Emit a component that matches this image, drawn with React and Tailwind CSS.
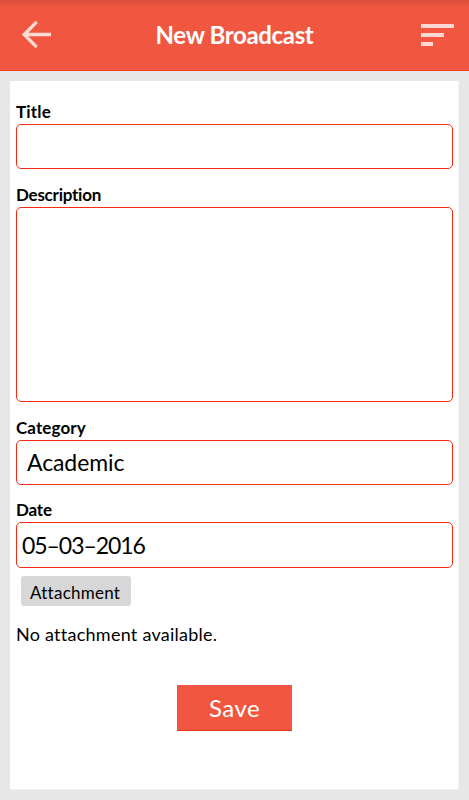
function BackIcon() {
  return (
    <svg className="block h-8 w-8" viewBox="0 0 32 32" fill="none" stroke="#ffd9d4" strokeWidth="3.4">
      <path d="M30 15.5H3.5M15.7 2.9L3.2 15.5L15.7 28.1" />
    </svg>
  );
}

function SortIcon() {
  return (
    <div className="flex w-[33px] flex-col gap-[5px]">
      <div className="h-[4px] w-[33px] bg-[#ffd6d1]" />
      <div className="h-[4px] w-[23px] bg-[#ffd6d1]" />
      <div className="h-[4px] w-[12px] bg-[#ffd6d1]" />
    </div>
  );
}

function Field({ label, tracking, height, gap, children }) {
  return (
    <div className={gap}>
      <div className="flex h-[24px] items-center text-[17px] font-bold">
        <span className={tracking}>{label}</span>
      </div>
      <div className={`flex items-center rounded-[5px] border border-[#f52a10] text-[23px] ${height}`}>{children}</div>
    </div>
  );
}

export default function App() {
  return (
    <div className="flex h-[800px] w-[469px] flex-col overflow-hidden whitespace-nowrap bg-[#e7e7e7] font-['Lato','Noto_Sans',sans-serif] text-black [font-variant-ligatures:none]">
      <header className="flex h-[71px] shrink-0 items-center justify-between border-b border-[#f23c0c] bg-linear-to-b from-[#dc4f3b] to-[#f15740] to-[8px] pr-[15px] pl-[21px]">
        <BackIcon />
        <h1 className="pr-[5px] text-[24px] font-bold text-white">
          <span className="tracking-[-0.35px]">New Broadcast</span>
        </h1>
        <SortIcon />
      </header>
      <main className="mx-[10px] mt-[10px] flex h-[709px] flex-col border-r border-b border-[#f2f2f2] bg-white pr-[5px] pl-[6px] pt-[19px]">
        <Field label="Title" tracking="tracking-[0.2px]" height="h-[45px]" gap="" />
        <Field label="Description" tracking="tracking-[-0.25px]" height="h-[195px]" gap="mt-[14px]" />
        <Field label="Category" tracking="tracking-[0.1px]" height="h-[45px]" gap="mt-[14px]">
          <span className="pl-[10px] tracking-[-0.1px]">Academic</span>
        </Field>
        <Field label="Date" tracking="tracking-[-0.2px]" height="h-[46px]" gap="mt-[13px]">
          <span className="pl-[5px] tracking-[-1.05px]">05–03–2016</span>
        </Field>
        <button className="mt-[8px] ml-[5px] flex h-[30px] w-[110px] items-center rounded-[3px] bg-[#d6d7d6] pt-[4px] pl-[9px] text-[17px]">
          <span className="tracking-[0.25px]">Attachment</span>
        </button>
        <p className="mt-[16px] text-[18px] leading-[24px]">
          <span className="tracking-[0.25px]">No attachment available.</span>
        </p>
        <button className="mt-[39px] ml-[161px] flex h-[46px] w-[115px] items-center justify-center border-b border-[#e83c1c] bg-[#f15740] text-[24px] text-white">
          <span className="tracking-[0.5px]">Save</span>
        </button>
      </main>
    </div>
  );
}
